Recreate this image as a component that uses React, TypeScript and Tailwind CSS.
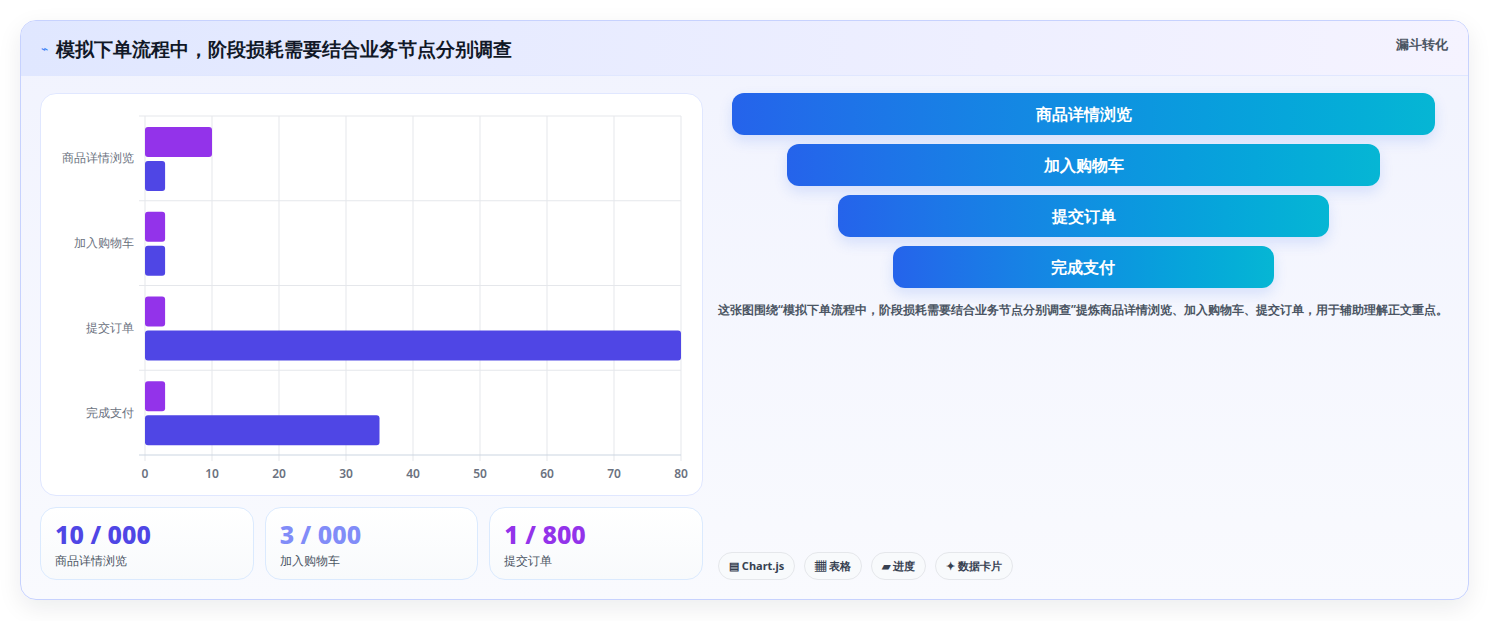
import React from 'react'

const cats = [
  { label: '商品详情浏览', a: 10, b: 3 },
  { label: '加入购物车', a: 3, b: 3 },
  { label: '提交订单', a: 3, b: 80 },
  { label: '完成支付', a: 3, b: 35 },
]

const funnel = [
  { label: '商品详情浏览', w: '96.2%' },
  { label: '加入购物车', w: '81.2%' },
  { label: '提交订单', w: '67.1%' },
  { label: '完成支付', w: '52%' },
]

const stats = [
  { value: '10 / 000', label: '商品详情浏览', color: 'text-[#4f46e5]' },
  { value: '3 / 000', label: '加入购物车', color: 'text-[#818cf8]' },
  { value: '1 / 800', label: '提交订单', color: 'text-[#9333ea]' },
]

function Chart() {
  const L = 104, T = 22, R = 640, B = 361
  const sx = (R - L) / 80
  const band = (B - T) / 4
  return (
    <svg width="662" height="401" className="block">
      {[0, 1, 2, 3, 4, 5, 6, 7, 8].map((i) => (
        <g key={i}>
          <line x1={L + i * 10 * sx} x2={L + i * 10 * sx} y1={T} y2={B + 6} stroke="#e5e7eb" />
          <text x={L + i * 10 * sx} y={384} textAnchor="middle" fontSize="12" fontWeight="600" fill="#6b7280">{i * 10}</text>
        </g>
      ))}
      {[0, 1, 2, 3, 4].map((i) => (
        <line key={i} x1={L - 6} x2={R} y1={T + i * band} y2={T + i * band} stroke={i === 4 ? '#cbd5e1' : '#e5e7eb'} />
      ))}
      {cats.map((c, i) => {
        const y0 = T + i * band
        return (
          <g key={c.label}>
            <text x={93} y={y0 + band / 2 + 4} textAnchor="end" fontSize="12" fill="#6b7280">{c.label}</text>
            <rect x={L} y={y0 + 11} width={c.a * sx} height={30} rx={3} fill="#9333ea" />
            <rect x={L} y={y0 + 45} width={c.b * sx} height={30} rx={3} fill="#4f46e5" />
          </g>
        )
      })}
    </svg>
  )
}

export default function App() {
  return (
    <div className="min-h-screen bg-white p-5 pb-0 font-['Noto_Sans_CJK_SC','Noto_Sans',sans-serif]">
      <div className="h-[580px] rounded-2xl border border-[#c7d2fe] bg-gradient-to-b from-[#f1f3fe] to-[#f9fafe] shadow-[0_8px_24px_rgba(15,23,42,0.08)] overflow-hidden flex flex-col">
        <div className="h-[55px] shrink-0 flex items-start justify-between px-5 border-b border-[#e0e7ff] bg-gradient-to-r from-[#e0e7ff] to-[#f5f3ff]">
          <div className="flex items-center gap-2 mt-[14px]">
            <span className="text-[#3b82f6] text-xs">⌁</span>
            <h1 className="text-[19px] font-bold text-[#111827] leading-7">模拟下单流程中，阶段损耗需要结合业务节点分别调查</h1>
          </div>
          <span className="mt-[14px] text-[13px] font-bold text-[#4b5563]">漏斗转化</span>
        </div>
        <div className="flex-1 flex gap-[15px] px-[19px] pt-[17px]">
          <div className="w-[663px] shrink-0 flex flex-col gap-[11px]">
            <div className="h-[403px] rounded-2xl border border-[#e0e7ff] bg-white">
              <Chart />
            </div>
            <div className="grid grid-cols-3 gap-[11px]">
              {stats.map((s) => (
                <div key={s.label} className="h-[73px] rounded-2xl border border-[#dbeafe] bg-gradient-to-b from-white to-[#f8fafc] px-[14px] pt-[10px]">
                  <div className={`text-[25px] font-extrabold leading-8 ${s.color}`}>{s.value}</div>
                  <div className="text-[12px] text-[#4b5563] mt-[2px]">{s.label}</div>
                </div>
              ))}
            </div>
          </div>
          <div className="flex-1 flex flex-col">
            <div className="flex flex-col items-center gap-[9px]">
              {funnel.map((f) => (
                <div key={f.label} style={{ width: f.w }} className="h-[42px] rounded-xl bg-gradient-to-r from-[#2563eb] to-[#06b6d4] flex items-center justify-center text-white font-bold text-[16px] shadow-[0_6px_14px_rgba(37,99,235,0.15)]">
                  {f.label}
                </div>
              ))}
            </div>
            <p className="mt-[12px] text-[12px] font-semibold leading-[20px] text-[#4b5563]">这张图围绕“模拟下单流程中，阶段损耗需要结合业务节点分别调查”提炼商品详情浏览、加入购物车、提交订单，用于辅助理解正文重点。</p>
            <div className="mt-auto mb-[19px] flex gap-[9px]">
              {['▤ Chart.js', '▦ 表格', '▰ 进度', '✦ 数据卡片'].map((t) => (
                <span key={t} className="h-[28px] px-[10px] rounded-full border border-[#e5e7eb] bg-[#f8fafc] text-[11px] font-bold text-[#374151] flex items-center">{t}</span>
              ))}
            </div>
          </div>
        </div>
      </div>
    </div>
  )
}
